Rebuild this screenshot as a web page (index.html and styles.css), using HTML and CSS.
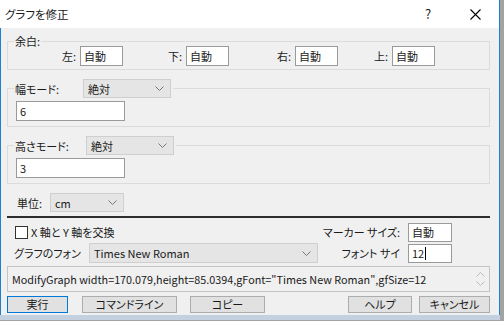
FILE: index.html
```html
<!DOCTYPE html>
<html lang="ja">

<head>
    <meta charset="UTF-8">
    <title>グラフを修正</title>
    <link rel="stylesheet" href="styles.css">
</head>

<body>
    <div class="window">
        <div class="titlebar">
            <span class="title">グラフを修正</span>
            <span class="help">?</span>
            <span class="close">
                <svg width="11" height="11" viewBox="0 0 11 11"><path d="M0.5 0.5 L10.5 10.5 M10.5 0.5 L0.5 10.5" stroke="#000" stroke-width="1.1" fill="none"/></svg>
            </span>
        </div>

        <div class="content">
            <!-- 余白 -->
            <fieldset class="group">
                <legend class="legend-text">余白:</legend>
                <div class="margin-row">
                    <div class="margin-cell"><span>左:</span><div class="field small">自動</div></div>
                    <div class="margin-cell"><span>下:</span><div class="field small">自動</div></div>
                    <div class="margin-cell"><span>右:</span><div class="field small">自動</div></div>
                    <div class="margin-cell"><span>上:</span><div class="field small">自動</div></div>
                </div>
            </fieldset>

            <!-- 幅モード -->
            <fieldset class="group group-mode">
                <legend class="legend-select">
                    <span class="width-label">幅モード:</span>
                    <div class="combo mode-combo">絶対<svg class="chev" width="9" height="5" viewBox="0 0 9 5"><path d="M0.5 0.5 L4.5 4.5 L8.5 0.5" stroke="#777" fill="none"/></svg></div>
                </legend>
                <div class="field mode-field">6</div>
            </fieldset>

            <!-- 高さモード -->
            <fieldset class="group group-mode">
                <legend class="legend-select">
                    <span class="height-label">高さモード:</span>
                    <div class="combo mode-combo">絶対<svg class="chev" width="9" height="5" viewBox="0 0 9 5"><path d="M0.5 0.5 L4.5 4.5 L8.5 0.5" stroke="#777" fill="none"/></svg></div>
                </legend>
                <div class="field mode-field">3</div>
            </fieldset>

            <div class="unit-row">
                <span class="unit-label">単位:</span>
                <div class="combo unit-combo">cm<svg class="chev" width="9" height="5" viewBox="0 0 9 5"><path d="M0.5 0.5 L4.5 4.5 L8.5 0.5" stroke="#777" fill="none"/></svg></div>
            </div>

            <div class="separator"></div>

            <div class="options">
                <div class="check-row">
                    <span class="checkbox"></span>
                    <span>X 軸と Y 軸を交換</span>
                </div>
                <span class="opt-label right">マーカー サイズ:</span>
                <div class="field opt-field">自動</div>

                <span class="opt-label">グラフのフォン</span>
                <div class="combo font-combo">Times New Roman<svg class="chev" width="9" height="5" viewBox="0 0 9 5"><path d="M0.5 0.5 L4.5 4.5 L8.5 0.5" stroke="#777" fill="none"/></svg></div>
                <span class="opt-label right">フォント サイ</span>
                <div class="field opt-field">12<span class="caret"></span></div>
            </div>

            <div class="cmd">
                <span class="cmd-text">ModifyGraph width=170.079,height=85.0394,gFont="Times New Roman",gfSize=12</span>
                <div class="cmd-scroll">
                    <svg width="9" height="5" viewBox="0 0 9 5"><path d="M0.5 4.5 L4.5 0.5 L8.5 4.5" stroke="#bbb" fill="none"/></svg>
                    <svg width="9" height="5" viewBox="0 0 9 5"><path d="M0.5 0.5 L4.5 4.5 L8.5 0.5" stroke="#bbb" fill="none"/></svg>
                </div>
            </div>

            <div class="buttons">
                <button class="btn btn-default btn-run">実行</button>
                <button class="btn btn-cmdline">コマンドライン</button>
                <button class="btn btn-copy">コピー</button>
                <span class="spacer"></span>
                <button class="btn btn-help">ヘルプ</button>
                <button class="btn btn-cancel">キャンセル</button>
            </div>
        </div>
        <div class="bottom-edge"></div>
    </div>
</body>

</html>
```

FILE: styles.css
```css
html {
    background-color: #a3a3a3;
}

body {
    margin: 0;
    font-family: "Noto Sans CJK JP", "Noto Sans", sans-serif;
    font-size: 11px;
    font-feature-settings: "palt";
    color: #1a1a1a;
    line-height: 14px;
}

.window {
    width: 500px;
    background-color: #f0f0f0;
}

/* barra de titulo */
.titlebar {
    display: flex;
    align-items: center;
    height: 28px;
    background-color: #fff;
    border-right: 1px solid #1e7fd0;
    padding-left: 5px;
}

.title {
    flex: 1;
    font-size: 11.5px;
}

.help {
    width: 12px;
    font-size: 13px;
    margin-right: 33px;
}

.close {
    display: flex;
    margin-right: 18px;
}

.content {
    border-left: 1px solid #1e7fd0;
    border-right: 1px solid #1e7fd0;
    padding: 6px 9px 2px 6px;
}

.group {
    margin: 0;
    padding: 0 8px 3px 8px;
    border: 1px solid #dcdcdc;
    min-width: 0;
}

.legend-text {
    margin-left: -2px;
    padding: 0 1px;
}

.margin-row {
    display: grid;
    grid-template-columns: 107px 106px 109px 97px;
    margin-top: -2px;
}

.margin-cell {
    display: flex;
    justify-content: flex-end;
    align-items: center;
}

.margin-cell span {
    margin-right: 4px;
}

.field {
    box-sizing: border-box;
    height: 20px;
    background-color: #fff;
    border: 1px solid #9a9a9a;
    padding: 2px 3px;
    display: flex;
    align-items: center;
}

.field.small {
    width: 43px;
}

.group-mode {
    margin-top: 9px;
    padding-bottom: 5px;
}

.legend-select {
    display: flex;
    align-items: center;
    margin-left: -2px;
    padding: 0 2px 0 1px;
}

.width-label {
    width: 68px;
}

.height-label {
    width: 71px;
}

.combo {
    box-sizing: border-box;
    height: 19px;
    background-color: #e5e5e5;
    border: 1px solid #cfcfcf;
    padding: 0 6px 0 4px;
    display: flex;
    align-items: center;
    justify-content: space-between;
}

.mode-combo {
    width: 88px;
}

.mode-field {
    width: 109px;
    margin-top: 3px;
}

.unit-row {
    display: flex;
    align-items: center;
    margin-top: 9px;
    padding-left: 10px;
}

.unit-label {
    width: 33px;
}

.unit-combo {
    width: 74px;
}

.separator {
    height: 2px;
    background-color: #2c2c2c;
    margin-top: 4px;
}

.options {
    display: grid;
    grid-template-columns: 82px 229px 90px 44px;
    grid-template-rows: 20px 22px;
    align-items: center;
    margin-top: 4px;
}

.check-row {
    grid-column: 1 / 3;
    display: flex;
    align-items: center;
    padding-left: 8px;
}

.checkbox {
    width: 11px;
    height: 11px;
    border: 1px solid #333;
    background-color: #fff;
    margin-right: 3px;
}

.opt-label {
    padding-left: 7px;
    white-space: nowrap;
}

.opt-label.right {
    text-align: right;
    padding-left: 0;
    padding-right: 8px;
}

.opt-field {
    height: 19px;
}

.font-combo {
    height: 20px;
}

.caret {
    width: 1px;
    height: 13px;
    background-color: #000;
    margin-left: 1px;
}

.cmd {
    display: flex;
    align-items: center;
    box-sizing: border-box;
    height: 26px;
    margin-top: 2px;
    width: 483px;
    border: 1px solid #c4c4c4;
    padding: 0 4px;
}

.cmd-text {
    flex: 1;
    font-size: 10.8px;
}

.cmd-scroll {
    display: flex;
    flex-direction: column;
    gap: 4px;
}

.buttons {
    display: flex;
    margin-top: 4px;
    width: 483px;
}

.btn {
    box-sizing: border-box;
    height: 17px;
    font-family: inherit;
    font-size: 11px;
    font-feature-settings: "palt";
    line-height: 13px;
    padding: 0;
    background-color: #e1e1e1;
    border: 1px solid #adadad;
    color: #1a1a1a;
}

.btn-default {
    border-color: #0078d7;
}

.btn-run {
    width: 61px;
}

.btn-cmdline {
    width: 95px;
    margin-left: 14px;
}

.btn-copy {
    width: 75px;
    margin-left: 13px;
}

.spacer {
    flex: 1;
}

.btn-help {
    width: 64px;
}

.btn-cancel {
    width: 71px;
    margin-left: 7px;
}

.bottom-edge {
    height: 5px;
    background-color: #c3d0df;
}
```
